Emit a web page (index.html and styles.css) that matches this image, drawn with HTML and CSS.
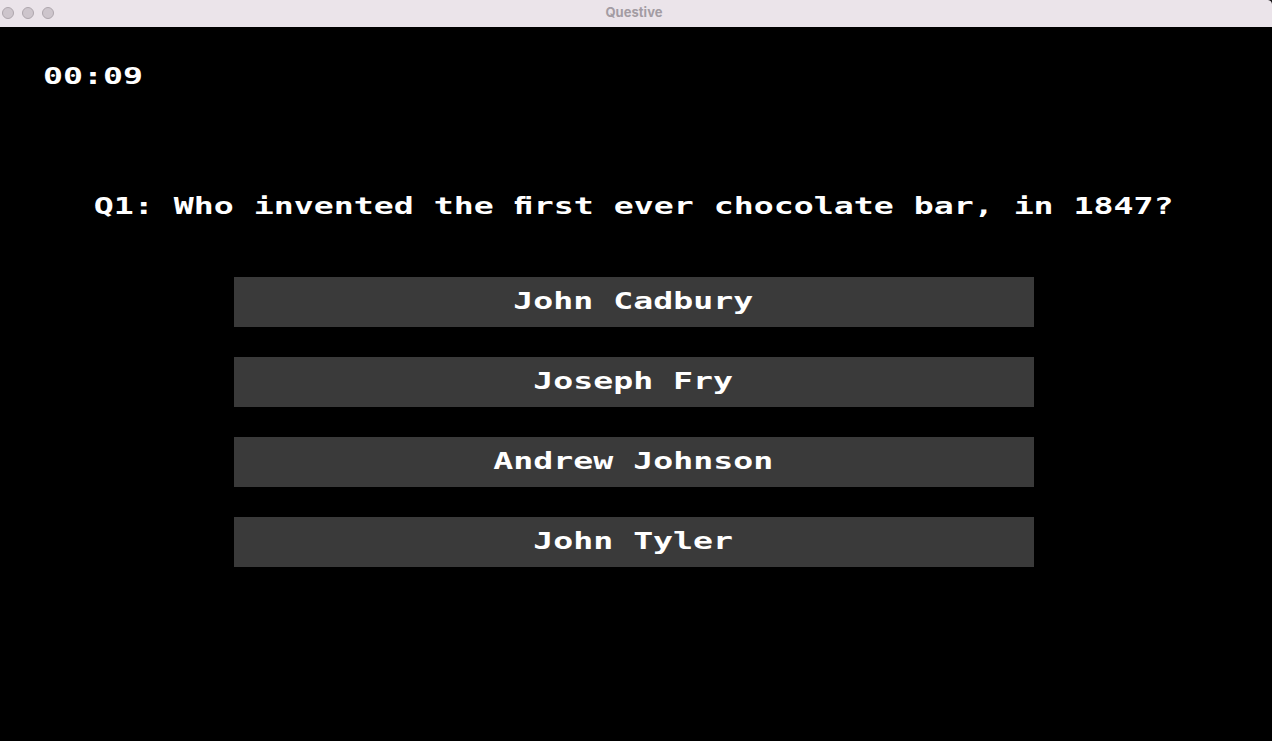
FILE: index.html
```html
<!DOCTYPE html>
<html lang="en">
<head>
<meta charset="utf-8">
<title>Questive</title>
<link rel="stylesheet" href="styles.css">
</head>
<body>
<div class="window">
  <header class="titlebar">
    <div class="lights"><span class="light"></span><span class="light"></span><span class="light"></span></div>
    <span class="title">Questive</span>
    <svg class="corner" width="4" height="4" viewBox="0 0 4 4"><path d="M0 0H4V4Q3.5 .5 0 0Z"/></svg>
  </header>
  <main class="game">
    <div class="timer"><span class="pixel from-left">00:09</span></div>
    <h1 class="question"><span class="pixel">Q1: Who invented the <span class="fi">fi</span>rst ever chocolate bar, in 1847?</span></h1>
    <div class="answers">
      <button class="answer"><span class="pixel">John Cadbury</span></button>
      <button class="answer"><span class="pixel">Joseph Fry</span></button>
      <button class="answer"><span class="pixel">Andrew Johnson</span></button>
      <button class="answer"><span class="pixel">John Tyler</span></button>
    </div>
  </main>
</div>
</body>
</html>
```
FILE: styles.css
```css
* { box-sizing: border-box; }
body { margin: 0; background: #000; }
.window { width: 1272px; height: 741px; display: flex; flex-direction: column; background: #000; overflow: hidden; }
.titlebar {
  position: relative;
  flex: none;
  height: 27px;
  display: grid;
  grid-template-columns: 1fr auto 1fr;
  align-items: center;
  padding: 0 6px 2px 2px;
  background: #ebe4ea;
}
.lights { display: flex; gap: 8px; }
.light { width: 12px; height: 12px; border: 1px solid #aea6ad; border-radius: 50%; background: #cdc5cc; }
.title { padding-bottom: 1px; font: 700 13px/16px Inter, "Liberation Sans", sans-serif; letter-spacing: 0.05px; color: #a39ca3; }
.corner { position: absolute; top: 0; right: 0; fill: #1c1a1c; }
.game { flex: 1; display: flex; flex-direction: column; color: #fff; }
.pixel {
  display: inline-block;
  font: 700 23.3px/30px "DejaVu Sans Mono", monospace;
  letter-spacing: 0;
  white-space: pre;
  transform: scaleX(1.4257);
}
.from-left { transform-origin: left; }
.fi {
  display: inline-block;
  width: 14.03px;
  font-family: "DejaVu Sans", sans-serif;
  transform: scaleX(0.76);
  transform-origin: left;
}
.timer { height: 30px; margin: 34px 0 0 43px; }
.question { display: flex; justify-content: center; width: 1267px; height: 30px; margin: 100px 0 0; }
.answers { display: flex; flex-direction: column; gap: 30px; width: 800px; margin: 56px 0 0 234px; }
.answer {
  display: flex;
  justify-content: center;
  align-items: center;
  height: 50px;
  padding: 0 2px 2px 0;
  border: 0;
  background: #3a3a3a;
  color: #fff;
}
```
